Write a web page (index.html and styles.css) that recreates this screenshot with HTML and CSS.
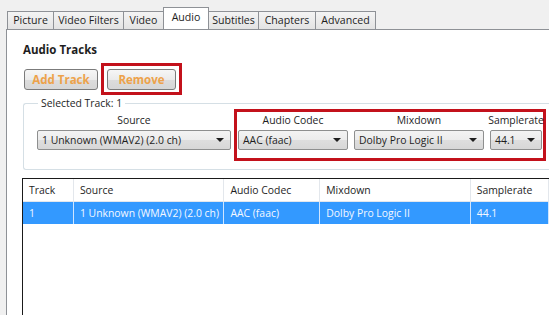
FILE: index.html
```html
<!DOCTYPE html>
<html lang="en">
<head>
    <meta charset="UTF-8">
    <meta name="viewport" content="width=device-width, initial-scale=1.0">
    <title>Audio</title>
    <link rel="stylesheet" href="styles.css">
</head>

<body>
    <div class="tabs">
        <div class="tab tab-picture">Picture</div>
        <div class="tab tab-filters">Video Filters</div>
        <div class="tab tab-video">Video</div>
        <div class="tab tab-audio active">Audio</div>
        <div class="tab tab-subs">Subtitles</div>
        <div class="tab tab-chapters">Chapters</div>
        <div class="tab tab-advanced">Advanced</div>
    </div>

    <div class="panel">
        <div class="title">Audio Tracks</div>

        <div class="buttons">
            <button class="btn btn-add">Add Track</button>
            <div class="mark mark-btn">
                <button class="btn btn-remove">Remove</button>
            </div>
        </div>

        <div class="group">
            <div class="group-title">Selected Track: 1</div>
            <div class="group-row">
                <div class="mark plain">
                    <div class="field f-source">
                        <div class="field-label">Source</div>
                        <div class="combo">1 Unknown (WMAV2) (2.0 ch)</div>
                    </div>
                </div>
                <div class="mark">
                    <div class="field f-codec">
                        <div class="field-label">Audio Codec</div>
                        <div class="combo">AAC (faac)</div>
                    </div>
                    <div class="field f-mix">
                        <div class="field-label">Mixdown</div>
                        <div class="combo">Dolby Pro Logic II</div>
                    </div>
                    <div class="field f-rate">
                        <div class="field-label">Samplerate</div>
                        <div class="combo">44.1</div>
                    </div>
                </div>
            </div>
        </div>

        <div class="track-list">
            <div class="row head">
                <div class="cell c-track">Track</div>
                <div class="cell c-source">Source</div>
                <div class="cell c-codec">Audio Codec</div>
                <div class="cell c-mix">Mixdown</div>
                <div class="cell c-rate">Samplerate</div>
            </div>
            <div class="row selected">
                <div class="cell c-track">1</div>
                <div class="cell c-source">1 Unknown (WMAV2) (2.0 ch)</div>
                <div class="cell c-codec">AAC (faac)</div>
                <div class="cell c-mix">Dolby Pro Logic II</div>
                <div class="cell c-rate">44.1</div>
            </div>
        </div>
    </div>
</body>
</html>
```

FILE: styles.css
```css
body {
    font-family: "Open Sans", "Noto Sans", sans-serif;
    font-size: 10.4px;
    margin: 0;
    color: #1e1e1e;
    background-color: #f0f0f0;
    height: 315px;
    overflow: hidden;
    display: flex;
    flex-direction: column;
}

/* tab strip */
.tabs {
    display: flex;
    align-items: flex-end;
    padding: 8px 0 0 7px;
    height: 21px;
    position: relative;
    z-index: 1;
}

.tab {
    box-sizing: border-box;
    height: 18px;
    line-height: 17px;
    text-align: center;
    margin-left: -1px;
    border: 1px solid #8e9196;
    border-bottom: none;
    background: linear-gradient(#f4f4f4, #e3e3e3);
    color: #1e1e1e;
    font-size: 10.6px;
    white-space: nowrap;
}

.tab:first-child {
    margin-left: 0;
}

.tab.active {
    height: 22px;
    line-height: 18px;
    background: #fff;
    position: relative;
    z-index: 2;
}

.tab-picture { width: 47px; }
.tab-filters { width: 71px; }
.tab-video { width: 41px; }
.tab-audio { width: 46px; }
.tab-subs { width: 51px; }
.tab-chapters { width: 58px; }
.tab-advanced { width: 61px; }

.panel {
    flex: 1;
    min-height: 0;
    display: flex;
    flex-direction: column;
    margin-left: 6px;
    border-left: 1px solid #8e9196;
    border-top: 1px solid #8e9196;
    background-color: #fff;
    padding: 13px 0 0 15px;
}

.title {
    font-weight: bold;
    font-size: 11.5px;
    line-height: 14px;
    margin-left: 1px;
}

/* buttons */
.buttons {
    display: flex;
    align-items: center;
    margin: 6px 0 0 2px;
}

.btn {
    font-family: inherit;
    font-size: 11.5px;
    font-weight: bold;
    color: #eda24a;
    height: 21px;
    padding: 0;
    border: 1px solid #7b7b7b;
    border-radius: 3px;
    background: linear-gradient(#f6f6f6 0%, #ebebeb 50%, #dcdcdc 51%, #d6d6d6 100%);
}

.btn-add { width: 74px; }
.btn-remove { width: 69px; }

.mark {
    display: flex;
    align-items: flex-start;
    border: 3px solid #c3111b;
    padding: 1px 1px 8px 1px;
    gap: 6px;
}

.mark-btn {
    margin-left: 3px;
    padding: 3px 3px 2px 3px;
}

.mark.plain {
    border-color: transparent;
    padding: 1px 0 8px 0;
}

/* group box */
.group {
    margin: 8px 0 0 1px;
    border: 1px solid #d5dfe5;
    border-right: none;
    border-radius: 3px 0 0 3px;
    padding: 0 0 8px 10px;
}

.group-title {
    display: inline-block;
    line-height: 14px;
    margin: -8px 0 0 4px;
    padding: 0 3px;
    background: #fff;
    vertical-align: top;
}

.group-row {
    display: flex;
    margin-top: -9px;
}

.field {
    display: flex;
    flex-direction: column;
    flex-shrink: 0;
}

.f-source { width: 194px; }
.f-codec { width: 110px; }
.f-mix { width: 130px; }
.f-rate { width: 52px; }

.field-label {
    text-align: center;
    line-height: 14px;
    margin: 0 -6px 3px;
    white-space: nowrap;
}

.combo {
    box-sizing: border-box;
    height: 20px;
    line-height: 18px;
    padding: 0 18px 0 4px;
    border: 1px solid #8e8f8f;
    border-radius: 2px;
    background: linear-gradient(#f3f3f3 0%, #ececec 50%, #dedede 51%, #d7d7d7 100%);
    position: relative;
    white-space: nowrap;
    overflow: hidden;
}

.combo::after {
    content: "";
    position: absolute;
    right: 6px;
    top: 7px;
    border-left: 4px solid transparent;
    border-right: 4px solid transparent;
    border-top: 4px solid #1e1e1e;
}

/* track list */
.track-list {
    flex: 1;
    margin-top: 8px;
    border-left: 1px solid #1a1a1a;
    border-top: 1px solid #1a1a1a;
    background-color: #fff;
}

.row {
    display: flex;
    height: 22px;
    line-height: 22px;
}

.row.head {
    border-bottom: 1px solid #e3e7ec;
}

.row.head .cell {
    border-right: 1px solid #e3e7ec;
}

.row.selected {
    background-color: #3399ff;
    color: #f4f8ff;
}

.row.selected .cell {
    border-right: 1px solid #cfe5ff;
}

.cell {
    padding-left: 6px;
    box-sizing: border-box;
    white-space: nowrap;
    overflow: hidden;
}

.c-track { width: 52px; }
.c-source { width: 154px; }
.c-codec { width: 98px; }
.c-mix { width: 154px; }
.c-rate { width: 80px; }
```
